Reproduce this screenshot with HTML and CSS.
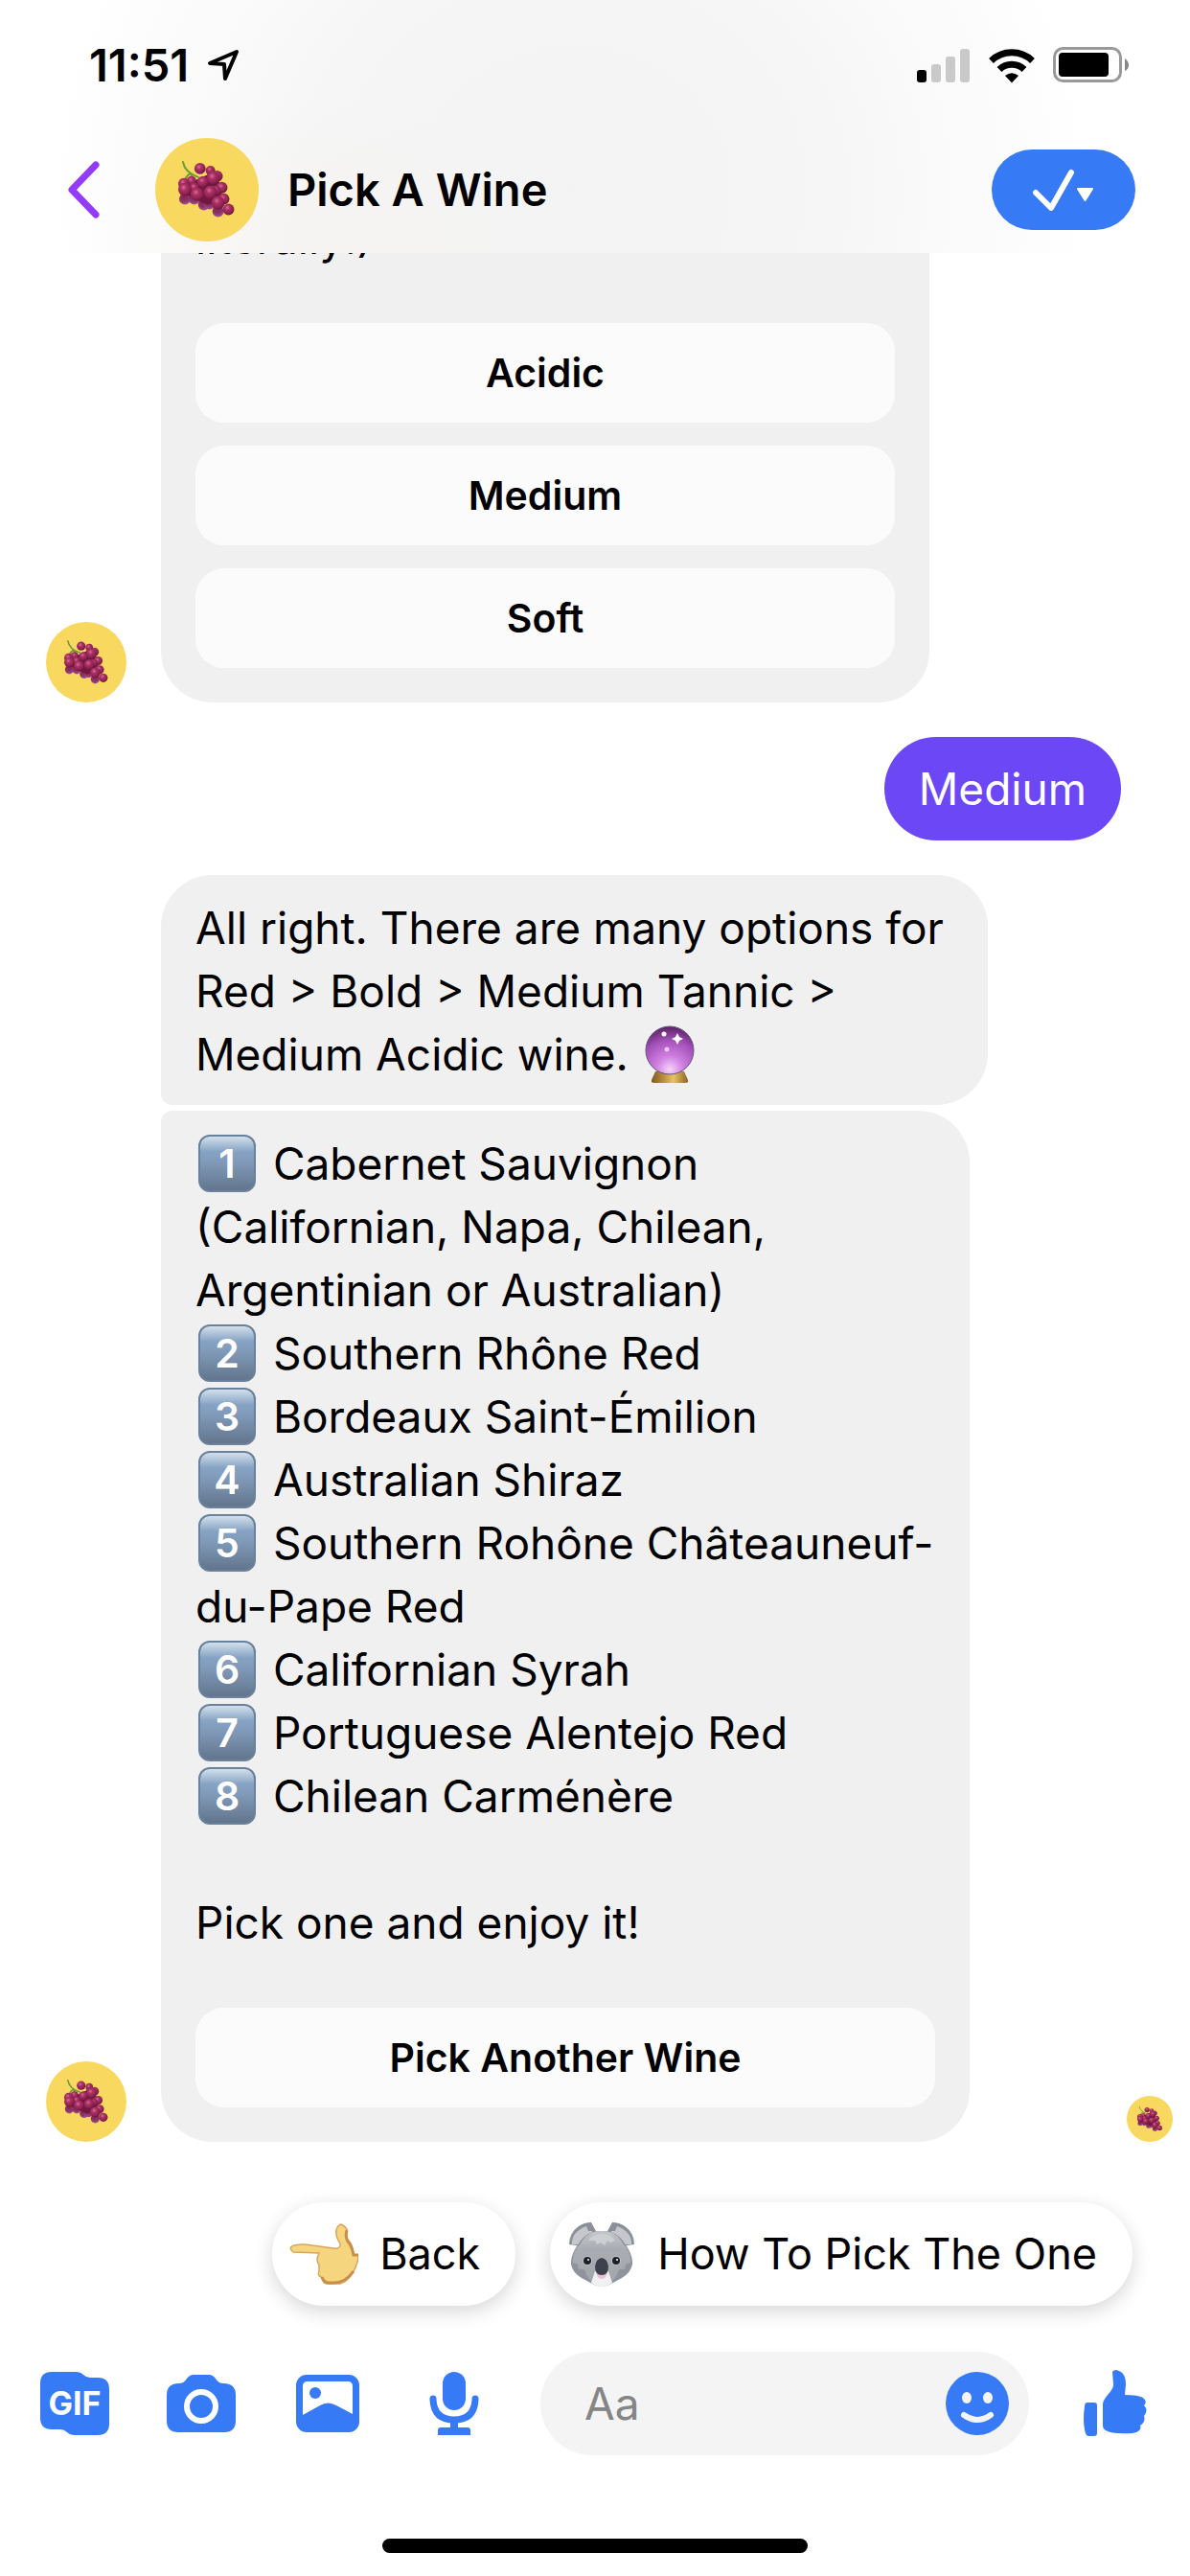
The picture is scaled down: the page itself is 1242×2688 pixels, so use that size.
FILE: index.html
```html
<!DOCTYPE html>
<html lang="en">
<head>
    <meta charset="UTF-8">
    <meta name="viewport" content="width=device-width, initial-scale=1.0">
    <title>Pick A Wine</title>
    <link rel="stylesheet" href="styles.css">
</head>
<body>
    <!-- Shared drawings -->
    <svg class="sprite" aria-hidden="true">
        <defs>
            <radialGradient id="berry" cx="0.4" cy="0.35" r="0.65">
                <stop offset="0" stop-color="#d56d97"/>
                <stop offset="0.35" stop-color="#ab3164"/>
                <stop offset="0.8" stop-color="#8b214f"/>
                <stop offset="1" stop-color="#6a173d"/>
            </radialGradient>
            <radialGradient id="berry-low" cx="0.45" cy="0.2" r="0.85">
                <stop offset="0" stop-color="#86204e"/>
                <stop offset="0.6" stop-color="#8a3468"/>
                <stop offset="1" stop-color="#a55b9c"/>
            </radialGradient>
            <radialGradient id="glass" cx="0.5" cy="0.9" r="0.95">
                <stop offset="0" stop-color="#f6d4fb"/>
                <stop offset="0.3" stop-color="#cf7fe0"/>
                <stop offset="0.65" stop-color="#a350b8"/>
                <stop offset="1" stop-color="#4c1a55"/>
            </radialGradient>
            <linearGradient id="brass">
                <stop offset="0" stop-color="#7d5a22"/>
                <stop offset="0.3" stop-color="#b38a3a"/>
                <stop offset="0.6" stop-color="#e6c363"/>
                <stop offset="1" stop-color="#8a6424"/>
            </linearGradient>
            <linearGradient id="fur" x2="0" y2="1">
                <stop offset="0" stop-color="#c4c7cc"/>
                <stop offset="0.35" stop-color="#a9acb1"/>
                <stop offset="1" stop-color="#a3a6ad"/>
            </linearGradient>
        </defs>
        <symbol id="grapes" viewBox="0 0 60 60">
            <path d="M5 1 Q7 12 21 17 M13 13 Q9 15 7 20 M14 14 L14 20" fill="none" stroke="#6f9a3b" stroke-width="2" stroke-linecap="round"/>
            <g fill="url(#berry-low)">
                <circle cx="7" cy="40" r="6"/><circle cx="17" cy="40" r="6"/><circle cx="27" cy="46" r="6"/>
                <circle cx="33" cy="45" r="6"/><circle cx="42" cy="53" r="6"/>
            </g>
            <path d="M10 24 L36 12 L46 26 L46 44 L30 46 L10 36z" fill="#701840"/>
            <g fill="url(#berry)">
                <circle cx="34" cy="10" r="5"/><circle cx="41" cy="16" r="6"/><circle cx="14" cy="21" r="5"/>
                <circle cx="46" cy="28" r="6"/><circle cx="40" cy="31" r="5"/><circle cx="6" cy="24" r="6"/>
                <circle cx="17" cy="28" r="5"/><circle cx="48" cy="40" r="6"/><circle cx="53" cy="51" r="6"/>
                <circle cx="23" cy="8" r="6"/><circle cx="37" cy="18" r="7"/><circle cx="26" cy="22" r="6"/>
                <circle cx="7" cy="30" r="7"/><circle cx="20" cy="35" r="7"/><circle cx="34" cy="33" r="7"/>
                <circle cx="42" cy="44" r="7"/>
            </g>
        </symbol>
    </svg>

    <header class="topbar">
        <div class="status-bar">
            <div class="status-left">
                <span class="time">11:51</span>
                <svg width="34" height="34" viewBox="0 0 34 34" fill="none" stroke="#000" stroke-width="4" stroke-linejoin="round"><path d="M3 15 L31 3 L19 31 L18 16z"/></svg>
            </div>
            <div class="status-right">
                <svg width="56" height="36" viewBox="0 0 56 36">
                    <rect x="0" y="23" width="10" height="13" rx="3"/>
                    <g fill="#c9c9c9"><rect x="15" y="17" width="10" height="19" rx="3"/><rect x="30" y="9" width="10" height="27" rx="3"/><rect x="45" y="1" width="10" height="35" rx="3"/></g>
                </svg>
                <svg width="48" height="37" viewBox="0 0 48 37">
                    <g fill="none" stroke="#000" stroke-width="7"><path d="M2.500 13.500 A31 31 0 0 1 45.500 13.500"/><path d="M11 22.500 A19 19 0 0 1 37 22.500"/></g>
                    <path d="M17 29 Q24 23.500 31 29 L24 36.500z"/>
                </svg>
                <svg width="80" height="38" viewBox="0 0 80 38">
                    <rect x="1.500" y="1.500" width="69" height="34" rx="9" fill="none" stroke="#999" stroke-width="3"/>
                    <rect x="6" y="6" width="52" height="25" rx="4"/>
                    <path d="M75 12 Q79 15 79 19 Q79 23 75 25z" fill="#888"/>
                </svg>
            </div>
        </div>
        <div class="title-bar">
            <button class="btn-back" aria-label="Back to chats">
                <svg width="34" height="60" viewBox="0 0 34 60" fill="none" stroke="#933bf8" stroke-width="7" stroke-linecap="round" stroke-linejoin="round"><path d="M30 4 L5 30 L30 56"/></svg>
            </button>
            <span class="avatar avatar-large"><svg><use href="#grapes"/></svg></span>
            <h1>Pick A Wine</h1>
            <button class="btn-check" aria-label="Conversation options">
                <svg width="66" height="44" viewBox="0 0 66 44">
                    <path d="M4 25 L20 41 L41 4" fill="none" stroke="#fff" stroke-width="6" stroke-linecap="round" stroke-linejoin="round"/>
                    <path d="M48 21 H63 L55.500 33z" fill="#fff" stroke="#fff" stroke-width="2" stroke-linejoin="round"/>
                </svg>
            </button>
        </div>
    </header>

    <main class="chat">
        <div class="message">
            <span class="avatar"><svg><use href="#grapes"/></svg></span>
            <div class="bubble bubble-question">
                <p>literally!)</p>
                <div class="options">
                    <button>Acidic</button>
                    <button>Medium</button>
                    <button>Soft</button>
                </div>
            </div>
        </div>

        <div class="message message-sent">
            <div class="bubble">Medium</div>
        </div>

        <div class="message">
            <div class="bubble bubble-first">
                <p>All right. There are many options for Red &gt; Bold &gt; Medium Tannic &gt; Medium Acidic wine. <svg class="emoji-ball" viewBox="0 0 60 60" role="img" aria-label="crystal ball">
                    <path d="M15 48 H45 L49 57 Q50 60 46 60 H14 Q10 60 11 57z" fill="url(#brass)"/>
                    <circle cx="30" cy="26" r="25" fill="url(#glass)" stroke="#66547f" stroke-width="1"/>
                    <path d="M38 8 L40 12 L44 14 L40 16 L38 20 L36 16 L32 14 L36 12z" fill="#fff"/>
                    <circle cx="24" cy="9" r="2.500" fill="#fff"/><circle cx="27" cy="25" r="2.500" fill="#f0c4f6"/>
                </svg></p>
            </div>
        </div>

        <div class="message">
            <span class="avatar"><svg><use href="#grapes"/></svg></span>
            <div class="bubble bubble-last">
                <p>
                    <span class="keycap">1</span> Cabernet Sauvignon<br>
                    (Californian, Napa, Chilean,<br>
                    Argentinian or Australian)<br>
                    <span class="keycap">2</span> Southern Rhône Red<br>
                    <span class="keycap">3</span> Bordeaux Saint-Émilion<br>
                    <span class="keycap">4</span> Australian Shiraz<br>
                    <span class="keycap">5</span> Southern Rohône Châteauneuf-<br>
                    du-Pape Red<br>
                    <span class="keycap">6</span> Californian Syrah<br>
                    <span class="keycap">7</span> Portuguese Alentejo Red<br>
                    <span class="keycap">8</span> Chilean Carménère<br>
                    <br>
                    Pick one and enjoy it!
                </p>
                <div class="options">
                    <button>Pick Another Wine</button>
                </div>
            </div>
            <span class="avatar avatar-small"><svg><use href="#grapes"/></svg></span>
        </div>
    </main>

    <footer>
        <div class="quick-replies">
            <button>
                <svg viewBox="0 0 72 72" aria-hidden="true">
                    <path d="M5 27 Q14 25 24 27 L46 30 Q54 31 53 25 Q48 18 49 11 Q51 5 54 5 Q57 6 60 10 Q59 17 61 21 Q66 25 67 37 H72 Q72 47 65 57 Q60 65 53 67 H40 Q36 67 35 63 L33 60 Q29 58 31 54 Q31 50 31 47 Q27 43 31 35 L4 34 Q-2 29 5 27z" fill="#f5d67e" stroke="#d9a55c" stroke-width="1.500" stroke-linejoin="round"/>
                    <path d="M60 11 Q58 18 61 23 Q65 27 67 37 H72" fill="none" stroke="#c98f48" stroke-width="3"/>
                    <path d="M34 60 Q36 67 44 66 Q58 67 67 54" fill="none" stroke="#c98f48" stroke-width="3"/>
                </svg>
                Back
            </button>
            <button>
                <svg viewBox="0 0 72 72" aria-hidden="true">
                    <path d="M16 28 L2 26 Q2 14 12 7 Q18 3 25 3 L31 14z M56 28 L70 26 Q70 14 60 7 Q54 3 47 3 L41 14z" fill="#8b8f98"/>
                    <path d="M12 26 L5 26 Q4 13 20 7 L22 12 L26 12 L27 18z M60 26 L67 26 Q68 13 52 7 L50 12 L46 12 L45 18z" fill="#c6c7cc"/>
                    <path d="M36 12 Q52 12 60 25 Q69 37 68 47 Q66 56 57 61 L46 67 Q36 73 26 67 L15 61 Q6 56 4 47 Q3 37 12 25 Q20 12 36 12z" fill="#8f939c"/>
                    <path d="M36 12 Q51 12 58 25 Q67 34 66 45 L61 47 L60 52 L54 52 L52 58 L46 66 H26 L20 58 L18 52 L12 52 L11 47 L6 45 Q5 34 14 25 Q21 12 36 12z" fill="url(#fur)"/>
                    <path d="M22 22 Q27 15 36 15 Q45 15 50 22 L45 24 L42 22 L39 27 L35 24 L31 26 L29 22z" fill="#cdd0d3"/>
                    <path d="M29 54 Q36 58 43 54 L47 66 Q36 74 25 66z" fill="#f1f1f3"/>
                    <path d="M30 55 Q36 60 42 55 Q41 62 36 62 Q31 62 30 55z" fill="#e9c1d2"/>
                    <circle cx="21" cy="43" r="5" fill="#bfc1c6"/><circle cx="51" cy="43" r="5" fill="#bfc1c6"/>
                    <circle cx="21" cy="43" r="4" fill="#1d2025"/><circle cx="51" cy="43" r="4" fill="#1d2025"/>
                    <circle cx="22" cy="42" r="1" fill="#fff"/><circle cx="52" cy="42" r="1" fill="#fff"/>
                    <path d="M36 40 Q42 41 43 49 Q43 58 36 58 Q29 58 29 49 Q30 41 36 40z" fill="#3d414c"/>
                </svg>
                How To Pick The One
            </button>
        </div>

        <form class="composer">
            <div class="tools">
                <button type="button" aria-label="GIF" class="btn-gif">
                    <svg width="72" height="66" viewBox="0 0 72 66" fill="#377af6">
                        <path d="M12 0 H37 Q42 0 45 3 Q48 6 52 6 H60 Q72 6 72 18 V54 Q72 66 60 66 H36 Q31 66 28 63 Q25 60 21 60 H12 Q0 60 0 48 V12 Q0 0 12 0z"/>
                    </svg>
                    <span>GIF</span>
                </button>
                <button type="button" aria-label="Camera">
                    <svg width="72" height="66" viewBox="0 0 72 66" fill="#377af6">
                        <path d="M28 3 H44 Q48 3 51 7 Q54 12 59 12 Q72 12 72 24 V51 Q72 63 60 63 H12 Q0 63 0 51 V24 Q0 12 13 12 Q18 12 21 7 Q24 3 28 3z"/>
                        <circle cx="36" cy="36" r="15" fill="#377af6" stroke="#fff" stroke-width="6"/>
                    </svg>
                </button>
                <button type="button" aria-label="Photos">
                    <svg width="66" height="66" viewBox="0 0 66 66" fill="#377af6">
                        <rect x="0" y="3" width="66" height="60" rx="11"/>
                        <path d="M12 10 H54 Q59 10 59 15 V44 L42 35 Q33 30 25 35 L7 45 V15 Q7 10 12 10z" fill="#fff"/>
                        <circle cx="20" cy="22" r="6"/>
                    </svg>
                </button>
                <button type="button" aria-label="Voice message">
                    <svg width="54" height="66" viewBox="0 0 54 66" fill="#377af6">
                        <rect x="15" y="0" width="24" height="40" rx="12"/>
                        <path d="M5 28 V29 Q6 50 27 50 Q48 50 49 29 V28" fill="none" stroke="#377af6" stroke-width="7" stroke-linecap="round"/>
                        <path d="M23 50 H31 V58 H41 Q44 58 44 61 V66 H10 V61 Q10 58 13 58 H23z"/>
                    </svg>
                </button>
            </div>
            <div class="text-box">
                <input type="text" placeholder="Aa" aria-label="Message">
                <button type="button" aria-label="Emoji">
                    <svg width="66" height="66" viewBox="0 0 66 66">
                        <circle cx="33" cy="33" r="33" fill="#377af6"/>
                        <ellipse cx="22" cy="27" rx="5" ry="6" fill="#f4f4f4"/><ellipse cx="44" cy="27" rx="5" ry="6" fill="#f4f4f4"/>
                        <path d="M19 45 Q33 55 47 45" fill="none" stroke="#f4f4f4" stroke-width="6" stroke-linecap="round"/>
                    </svg>
                </button>
            </div>
            <button type="button" aria-label="Like">
                <svg width="66" height="70" viewBox="0 0 66 70" fill="#377af6">
                    <path d="M4 34 H11 Q14 34 14 37 V66 Q14 69 11 69 H5 Q2 69 1 62 Q-1 52 1 38 Q1 34 4 34z"/>
                    <path d="M30 2 Q31 0 34 0 Q44 2 44 15 L43 26 Q57 26 62 29 Q67 33 63 37 Q68 42 63 48 Q65 54 59 58 Q61 62 55 65 Q50 67 36 66 Q20 65 20 58 V36 Q20 32 25 26 Q31 20 31 15z"/>
                </svg>
            </button>
        </form>
        <div class="home-indicator"></div>
    </footer>
</body>
</html>
```
FILE: styles.css
```css
* {
    margin: 0;
    padding: 0;
    box-sizing: border-box;
    font-family: Inter, 'Liberation Sans', sans-serif;
}

body {
    display: flex;
    flex-direction: column;
    height: 100vh;
    background-color: #fff;
    color: #000;
    font-size: 46px;
    line-height: 66px;
}

button {
    flex-shrink: 0;
    border: none;
    background: none;
    color: inherit;
    font-size: inherit;
    line-height: inherit;
    cursor: pointer;
}

svg {
    display: block;
    flex-shrink: 0;
}

.sprite {
    position: absolute;
    width: 0;
    height: 0;
}

/* Header */
.topbar {
    flex-shrink: 0;
    height: 264px;
    background:
        radial-gradient(ellipse 240px 160px at 26% 100%, rgba(240, 225, 210, 0.12), rgba(255, 255, 255, 0)),
        radial-gradient(ellipse 44% 500px at 48% 75%, #f3f3f3, #f6f6f6 50%, #fff);
}

.status-bar {
    display: flex;
    justify-content: space-between;
    align-items: center;
    height: 136px;
    padding: 0 63px 0 93px;
}

.status-left, .status-right {
    display: flex;
    align-items: center;
}

.status-left {
    gap: 19px;
}

.status-right {
    gap: 19px;
}

.time {
    font-size: 47px;
    font-weight: 600;
}

.title-bar {
    display: flex;
    align-items: center;
    height: 124px;
    padding: 0 57px 0 70px;
}

.title-bar h1 {
    flex: 1;
    font-size: 47px;
    font-weight: 600;
    margin-left: 30px;
}

.btn-back {
    margin-right: 58px;
}

.btn-check {
    display: flex;
    align-items: center;
    justify-content: center;
    width: 150px;
    height: 84px;
    border-radius: 42px;
    background-color: #377af6;
}

/* Avatars */
.avatar {
    display: flex;
    align-items: center;
    justify-content: center;
    flex-shrink: 0;
    width: 84px;
    height: 84px;
    border-radius: 50%;
    background-color: #f8d85e;
}

.avatar svg {
    width: 55%;
    height: 55%;
}

.avatar-large {
    width: 108px;
    height: 108px;
}

.avatar-small {
    width: 48px;
    height: 48px;
    margin-left: auto;
}

/* Messages */
.chat {
    display: flex;
    flex-direction: column;
    justify-content: flex-end;
    flex: 1;
    min-height: 0;
    overflow: hidden;
    padding: 0 18px 0 48px;
}

.message {
    display: flex;
    flex-shrink: 0;
    align-items: flex-end;
}

.message .bubble {
    padding: 22px 36px 20px;
    border-radius: 54px;
    background-color: #f0f0f0;
    margin-left: 120px;
}

.message .avatar + .bubble {
    margin-left: 36px;
    padding-bottom: 36px;
}

.message .bubble-question {
    width: 802px;
}

.message .bubble-first {
    width: 863px;
    border-bottom-left-radius: 12px;
    margin-bottom: 6px;
}

.message .bubble-last {
    width: 844px;
    border-top-left-radius: 12px;
}

.message-sent {
    justify-content: flex-end;
    padding: 36px 54px 36px 0;
}

.message-sent .bubble {
    padding: 21px 36px;
    background-color: #6c47f6;
    color: #fff;
}

.options {
    display: flex;
    flex-direction: column;
    gap: 24px;
    margin-top: 56px;
}

.options button {
    height: 104px;
    border-radius: 30px;
    background-color: #fbfbfb;
    font-size: 41px;
    font-weight: 600;
}

.keycap {
    display: inline-block;
    width: 60px;
    height: 60px;
    margin: 0 5px 0 3px;
    border: 2px solid #6a819b;
    border-radius: 12px;
    background: linear-gradient(#d3e0ec, #86a3c4 28%, #7f98b7 50%, #62758c);
    color: #fff;
    font-size: 41px;
    font-weight: 600;
    line-height: 56px;
    text-align: center;
    vertical-align: 2px;
}

.emoji-ball {
    display: inline-block;
    width: 60px;
    height: 60px;
    vertical-align: -13px;
}

/* Quick replies */
.quick-replies {
    display: flex;
    justify-content: flex-end;
    gap: 36px;
    padding: 63px 60px 48px;
}

.quick-replies button {
    display: flex;
    align-items: center;
    gap: 22px;
    height: 108px;
    padding: 0 37px 0 18px;
    border-radius: 54px;
    background-color: #fff;
    box-shadow: 0 6px 20px rgba(0, 0, 0, 0.16);
    font-size: 45px;
}

.quick-replies svg {
    width: 72px;
    height: 72px;
}

/* Composer */
.composer {
    display: flex;
    align-items: center;
    padding: 0 45px 0 42px;
}

.tools {
    display: flex;
    align-items: center;
    gap: 60px;
}

.tools button {
    display: grid;
    place-items: center;
    width: 72px;
}

.btn-gif svg, .btn-gif span {
    grid-area: 1 / 1;
}

.btn-gif span {
    color: #fff;
    font-size: 34px;
    font-weight: 700;
}

.text-box {
    display: flex;
    align-items: center;
    flex: 1;
    min-width: 0;
    height: 108px;
    margin: 0 57px 0 54px;
    padding: 0 21px 0 46px;
    border-radius: 54px;
    background-color: #f4f4f4;
}

.text-box input {
    flex: 1;
    min-width: 0;
    border: none;
    outline: none;
    background: none;
    font-size: 46px;
}

.text-box input::placeholder {
    color: #858585;
}

.home-indicator {
    width: 444px;
    height: 15px;
    margin: 87px auto 24px;
    border-radius: 8px;
    background-color: #000;
}
```
